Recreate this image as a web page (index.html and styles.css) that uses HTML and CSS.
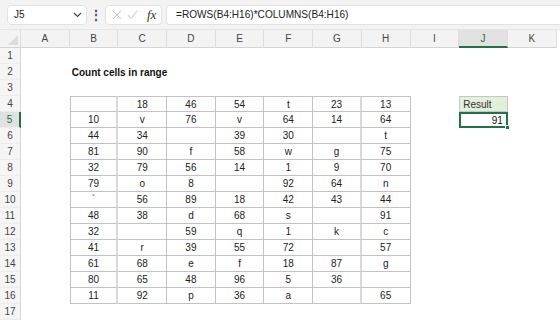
FILE: index.html
```html
<!DOCTYPE html>
<html>
<head>
<meta charset="utf-8">
<link rel="stylesheet" href="styles.css">
</head>
<body>
<div class="toolbar">
  <div class="namebox"><span>J5</span>
    <svg class="chev" width="9" height="6" viewBox="0 0 9 6"><path d="M1 1 L4.5 4.5 L8 1" fill="none" stroke="#444" stroke-width="1.2"/></svg>
  </div>
  <div class="dots">⋮</div>
  <div class="fxbox">
    <svg width="10" height="10" viewBox="0 0 10 10"><path d="M1 1 L9 9 M9 1 L1 9" stroke="#c4c4c4" stroke-width="1"/></svg>
    <svg width="11" height="10" viewBox="0 0 11 10"><path d="M1 5 L4 8.5 L10 1" fill="none" stroke="#c4c4c4" stroke-width="1"/></svg>
    <span class="fx">fx</span>
  </div>
  <div class="formula">=ROWS(B4:H16)*COLUMNS(B4:H16)</div>
</div>
<div class="sheet">
  <div class="corner"><svg width="10" height="10" viewBox="0 0 10 10"><path d="M10 0 L10 10 L0 10 Z" fill="#dcdcdc"/></svg></div>
  <div class="ch">A</div><div class="ch">B</div><div class="ch">C</div><div class="ch">D</div><div class="ch">E</div><div class="ch">F</div><div class="ch">G</div><div class="ch">H</div><div class="ch">I</div><div class="ch sel">J</div><div class="ch">K</div>

  <div class="rh">1</div><div></div><div></div><div></div><div></div><div></div><div></div><div></div><div></div><div></div><div></div><div></div>
  <div class="rh">2</div><div></div><div class="title">Count cells in range</div><div></div><div></div><div></div><div></div><div></div><div></div><div></div><div></div><div></div>
  <div class="rh">3</div><div></div><div></div><div></div><div></div><div></div><div></div><div></div><div></div><div></div><div></div><div></div>

  <div class="rh">4</div><div></div>
  <div class="d t l wb"></div><div class="d t">18</div><div class="d t">46</div><div class="d t">54</div><div class="d t">t</div><div class="d t wb">23</div><div class="d t">13</div>
  <div></div><div class="res">Result</div><div></div>

  <div class="rh rsel">5</div><div></div>
  <div class="d l wb">10</div><div class="d">v</div><div class="d">76</div><div class="d">v</div><div class="d">64</div><div class="d wb">14</div><div class="d">64</div>
  <div></div><div class="val">91<span class="handle"></span></div><div></div>

  <div class="rh">6</div><div></div>
  <div class="d l wb">44</div><div class="d">34</div><div class="d"></div><div class="d">39</div><div class="d">30</div><div class="d wb"></div><div class="d">t</div>
  <div></div><div></div><div></div>

  <div class="rh">7</div><div></div>
  <div class="d l wb">81</div><div class="d">90</div><div class="d">f</div><div class="d">58</div><div class="d">w</div><div class="d wb">g</div><div class="d">75</div>
  <div></div><div></div><div></div>

  <div class="rh">8</div><div></div>
  <div class="d l wb">32</div><div class="d">79</div><div class="d">56</div><div class="d">14</div><div class="d">1</div><div class="d wb">9</div><div class="d">70</div>
  <div></div><div></div><div></div>

  <div class="rh">9</div><div></div>
  <div class="d l wb">79</div><div class="d">o</div><div class="d">8</div><div class="d"></div><div class="d">92</div><div class="d wb">64</div><div class="d">n</div>
  <div></div><div></div><div></div>

  <div class="rh">10</div><div></div>
  <div class="d l wb">`</div><div class="d">56</div><div class="d">89</div><div class="d">18</div><div class="d">42</div><div class="d wb">43</div><div class="d">44</div>
  <div></div><div></div><div></div>

  <div class="rh">11</div><div></div>
  <div class="d l wb">48</div><div class="d">38</div><div class="d">d</div><div class="d">68</div><div class="d">s</div><div class="d wb"></div><div class="d">91</div>
  <div></div><div></div><div></div>

  <div class="rh">12</div><div></div>
  <div class="d l wb">32</div><div class="d"></div><div class="d">59</div><div class="d">q</div><div class="d">1</div><div class="d wb">k</div><div class="d">c</div>
  <div></div><div></div><div></div>

  <div class="rh">13</div><div></div>
  <div class="d l wb">41</div><div class="d">r</div><div class="d">39</div><div class="d">55</div><div class="d">72</div><div class="d wb"></div><div class="d">57</div>
  <div></div><div></div><div></div>

  <div class="rh">14</div><div></div>
  <div class="d l wb">61</div><div class="d">68</div><div class="d">e</div><div class="d">f</div><div class="d">18</div><div class="d wb">87</div><div class="d">g</div>
  <div></div><div></div><div></div>

  <div class="rh">15</div><div></div>
  <div class="d l wb">80</div><div class="d">65</div><div class="d">48</div><div class="d">96</div><div class="d">5</div><div class="d wb">36</div><div class="d"></div>
  <div></div><div></div><div></div>

  <div class="rh">16</div><div></div>
  <div class="d l wb">11</div><div class="d">92</div><div class="d">p</div><div class="d">36</div><div class="d">a</div><div class="d wb"></div><div class="d">65</div>
  <div></div><div></div><div></div>

  <div class="rh">17</div><div></div><div></div><div></div><div></div><div></div><div></div><div></div><div></div><div></div><div></div><div></div>
</div>
</body>
</html>
```
FILE: styles.css
```css
* { box-sizing: border-box; }
html, body { margin: 0; padding: 0; }
body {
  width: 560px;
  height: 320px;
  overflow: hidden;
  background: #ffffff;
  font-family: "Liberation Sans", Arial, sans-serif;
  color: #222;
}
.toolbar {
  height: 30px;
  background: #f3f3f3;
  border-bottom: 1px solid #e4e4e4;
  display: flex;
  align-items: center;
  padding-left: 7px;
}
.namebox {
  width: 80px;
  height: 20px;
  background: #fff;
  border: 1px solid #e2e2e2;
  border-radius: 4px;
  display: flex;
  align-items: center;
  justify-content: space-between;
  padding: 0 4px 0 6px;
  font-size: 10px;
  color: #222;
}
.dots {
  width: 18px;
  text-align: center;
  font-size: 12px;
  color: #444;
  font-weight: bold;
}
.fxbox {
  width: 57px;
  height: 20px;
  background: #fff;
  border: 1px solid #e2e2e2;
  border-radius: 4px;
  display: flex;
  align-items: center;
  gap: 5px;
  padding-left: 6px;
}
.fx {
  font-family: "Liberation Serif", "Times New Roman", serif;
  font-style: italic;
  font-size: 13px;
  color: #333;
  margin-left: 4px;
}
.formula {
  flex: 1;
  margin-left: 4px;
  height: 20px;
  background: #fff;
  border: 1px solid #e2e2e2;
  border-right: none;
  border-radius: 4px 0 0 4px;
  display: flex;
  align-items: center;
  padding-left: 9px;
  font-size: 10.1px;
  color: #222;
}
.sheet {
  display: grid;
  grid-template-columns: 21px repeat(11, 48.7px);
  grid-template-rows: 18px repeat(17, 16px);
  font-size: 10px;
}
.sheet > div {
  display: flex;
  align-items: center;
  white-space: nowrap;
}
.corner {
  background: #f3f3f3;
  border-right: 1px solid #dcdcdc;
  border-bottom: 1px solid #d4d4d4;
  justify-content: flex-end;
  align-items: flex-end !important;
  padding: 0 2px 2px 0;
}
.corner svg { display: block; }
.ch {
  background: #f3f3f3;
  border-right: 1px solid #dedede;
  border-bottom: 1px solid #d4d4d4;
  justify-content: center;
  color: #444;
}
.ch.sel {
  background: #e1e1e1;
  border-bottom: 2px solid #217346;
  color: #217346;
}
.rh {
  background: #f5f5f5;
  border-right: 1px solid #d4d4d4;
  border-bottom: 1px solid #ececec;
  justify-content: center;
  color: #444;
}
.rh.rsel {
  background: #e1e1e1;
  border-right: 2px solid #217346;
  color: #217346;
}
.title {
  font-weight: bold;
  padding-left: 2px;
  color: #111;
}
.d {
  justify-content: center;
  border-right: 1px solid #c2c2c2;
  border-bottom: 1px solid #c2c2c2;
}
.d.t { border-top: 1px solid #c2c2c2; }
.d.l { border-left: 1px solid #c2c2c2; }
.d.wb { border-right: 2px solid #d8d8d8; }
.res {
  background: #e2efda;
  border: 1px solid #c6c6c6;
  padding-left: 3px;
  color: #333;
}
.val {
  position: relative;
  justify-content: flex-end;
  border: 2px solid #217346;
  padding-right: 3px;
  color: #111;
}
.handle {
  position: absolute;
  right: -4px;
  bottom: -4px;
  width: 5px;
  height: 5px;
  background: #217346;
  border: 1px solid #fff;
}
```
